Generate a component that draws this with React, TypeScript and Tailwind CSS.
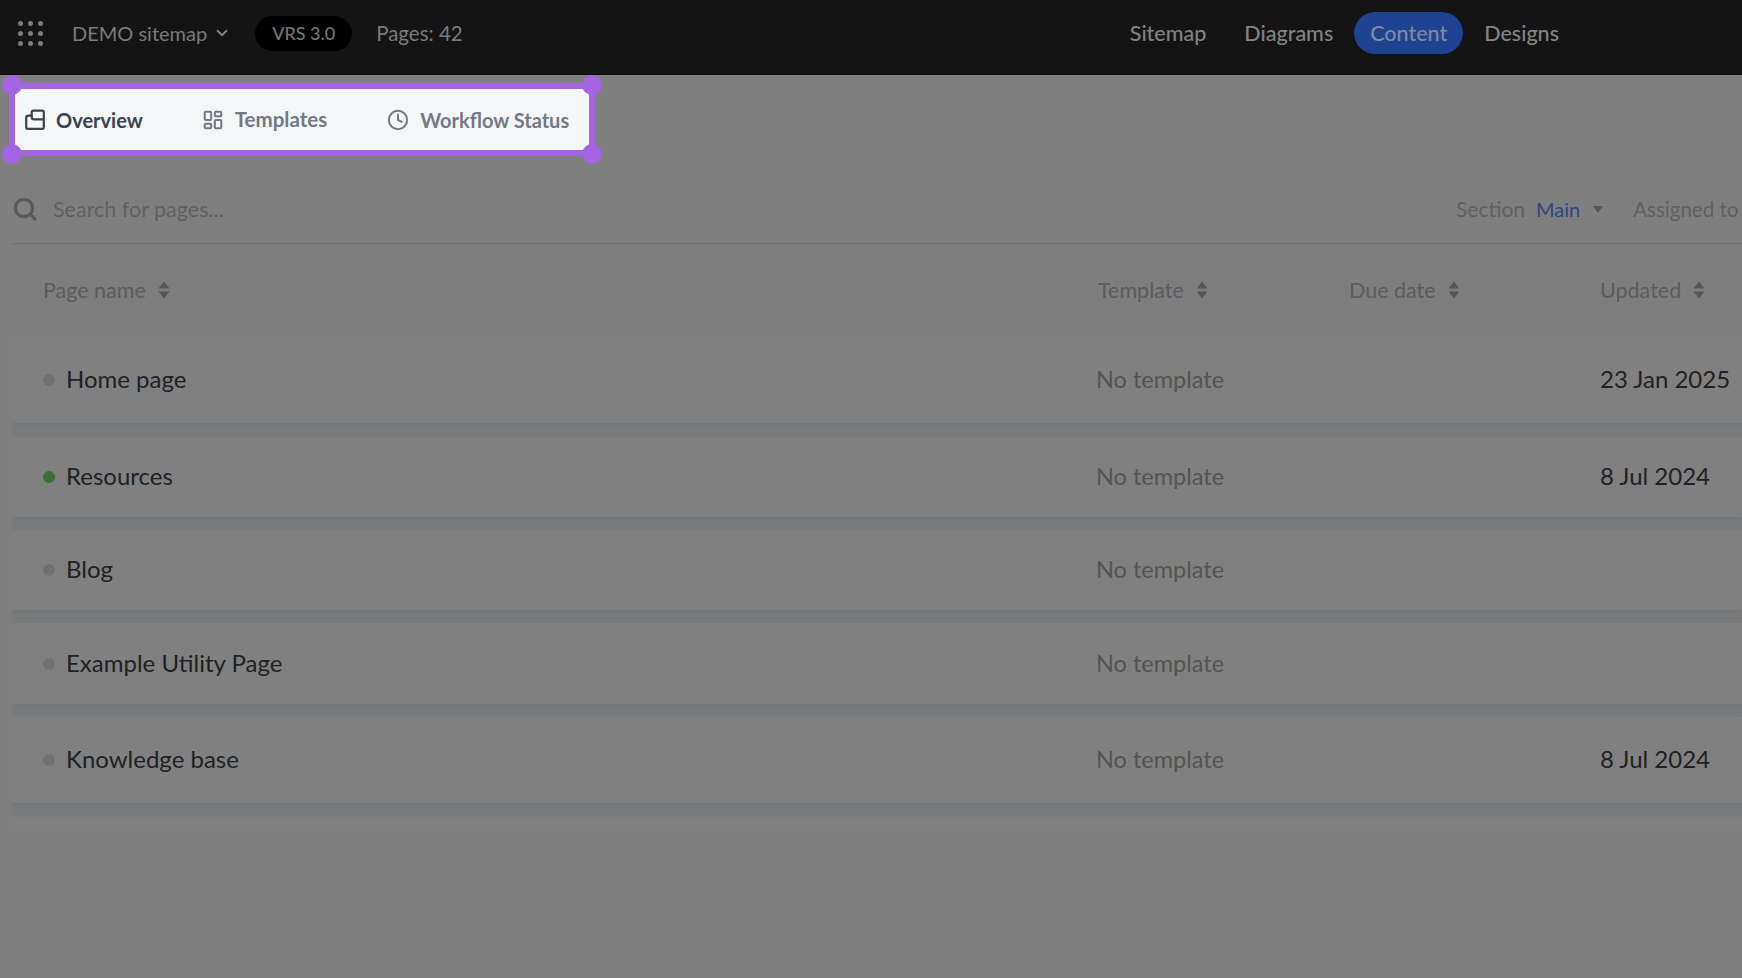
import { ChevronDown, Clock, LayoutDashboard, Search } from "lucide-react";

const rows = [
  { name: "Home page", dot: "bg-[#6f7072]", updated: "23 Jan 2025", cls: "h-[87px] mb-[14px]" },
  { name: "Resources", dot: "bg-[#3a7036]", updated: "8 Jul 2024", cls: "h-[80px] mb-[13px]" },
  { name: "Blog", dot: "bg-[#6f7072]", updated: "", cls: "h-[80px] mb-[13px]" },
  { name: "Example Utility Page", dot: "bg-[#6f7072]", updated: "", cls: "h-[81px] mb-[13px]" },
  { name: "Knowledge base", dot: "bg-[#6f7072]", updated: "8 Jul 2024", cls: "h-[86px] mb-[14px]" },
];

function SortIcon() {
  return (
    <svg width="14" height="18" viewBox="0 0 14 18" className="shrink-0 text-[#565656]" fill="currentColor">
      <path d="M7 0.5 12.5 7.5H1.5Z" />
      <path d="M7 17.5 1.5 10.5H12.5Z" />
    </svg>
  );
}

function OverviewIcon() {
  return (
    <svg width="22" height="22" viewBox="0 0 20 20" fill="none" stroke="currentColor" strokeWidth="2" strokeLinejoin="round" className="shrink-0">
      <path d="M7 6V3a1.5 1.5 0 0 1 1.5-1.5h8A1.5 1.5 0 0 1 18 3v13.5a1.5 1.5 0 0 1-1.5 1.5h-13A1.5 1.5 0 0 1 2 16.5V8a2 2 0 0 1 2-2h3v1.5a2 2 0 0 0 2 2h9" />
    </svg>
  );
}

function DotGrid() {
  return (
    <div className="grid grid-cols-3 gap-x-[5px] gap-y-[5px] w-[25px]">
      {Array.from({ length: 9 }).map((_, i) => (
        <span key={i} className="w-[5px] h-[5px] rounded-full bg-[#7d7d7d]" />
      ))}
    </div>
  );
}

function Th({ label, cls }: { label: string; cls: string }) {
  return (
    <div className={`flex items-center gap-[11px] text-[21.5px] text-[#5b5b5b] ${cls}`}>
      <span>{label}</span>
      <SortIcon />
    </div>
  );
}

export default function App() {
  return (
    <div className="w-[1742px] h-[978px] overflow-hidden bg-[#7f7f7f] font-['Lato',sans-serif]">
      <header className="h-[75px] bg-[#141414] flex items-center justify-between pl-[18px] pr-[183px] pb-[8px] border-b border-[#0c0c0c]">
        <div className="flex items-center">
          <DotGrid />
          <span className="ml-[29px] text-[20px] text-[#7a7a7a]">DEMO sitemap</span>
          <ChevronDown size={18} strokeWidth={2.5} className="ml-[6px] text-[#808080]" />
          <span className="ml-[24px] w-[97px] h-[35px] rounded-full bg-black flex items-center justify-center text-[18px] font-medium text-[#777777]">VRS 3.0</span>
          <span className="ml-[24px] text-[20.5px] text-[#7a7a7a]">Pages: 42</span>
        </div>
        <nav className="flex items-center text-[21.5px] font-medium text-[#838383]">
          <span>Sitemap</span>
          <span className="ml-[38px]">Diagrams</span>
          <span className="ml-[21px] w-[109px] h-[42px] rounded-full bg-[#1d4391] text-[#7f8a9f] flex items-center justify-center">Content</span>
          <span className="ml-[21px]">Designs</span>
        </nav>
      </header>

      <div className="pl-[12px] pt-[8px]">
        <div className="relative -ml-[3px] w-[586px] h-[73px] border-[6px] border-[#a463e0] bg-[#f5f6f8] flex items-center pl-[9px] text-[20px] font-bold">
          <span className="flex items-center text-[#3b424d]">
            <OverviewIcon />
            <span className="ml-[10px]">Overview</span>
          </span>
          <span className="flex items-center text-[#737985] ml-[59px]">
            <LayoutDashboard size={22} strokeWidth={2.2} className="shrink-0" />
            <span className="ml-[11px] text-[20.5px]">Templates</span>
          </span>
          <span className="flex items-center text-[#737985] ml-[60px]">
            <Clock size={22} strokeWidth={2.2} className="shrink-0" />
            <span className="ml-[11px]">Workflow Status</span>
          </span>
          <span className="absolute -left-[13px] -top-[14px] w-[20px] h-[20px] rounded-full bg-[#a463e0]" />
          <span className="absolute -right-[13px] -top-[14px] w-[20px] h-[20px] rounded-full bg-[#a463e0]" />
          <span className="absolute -left-[13px] -bottom-[14px] w-[20px] h-[20px] rounded-full bg-[#a463e0]" />
          <span className="absolute -right-[13px] -bottom-[14px] w-[20px] h-[20px] rounded-full bg-[#a463e0]" />
        </div>

        <div className="mt-[28px] h-[60px] pb-[9px] flex items-center border-b border-[#6e6f70] whitespace-nowrap">
          <Search size={26} strokeWidth={3} className="text-[#585a5c] shrink-0" />
          <span className="ml-[15px] text-[21.5px] text-[#5f5f5f]">Search for pages...</span>
          <div className="ml-auto w-[286px] flex items-center text-[21px] text-[#606060]">
            <span>Section</span>
            <span className="ml-[11px] text-[20px] text-[#2c4a80]">Main</span>
            <svg width="10" height="7" viewBox="0 0 10 7" className="ml-[13px] text-[#565656] shrink-0" fill="currentColor">
              <path d="M0 0H10L5 7Z" />
            </svg>
            <span className="ml-[30px] text-[20.5px]">Assigned to</span>
          </div>
        </div>

        <div className="h-[92px] flex items-center pl-[31px] whitespace-nowrap bg-[#7e7e7f]">
          <Th label="Page name" cls="w-[1055px]" />
          <Th label="Template" cls="w-[251px]" />
          <Th label="Due date" cls="w-[251px]" />
          <Th label="Updated" cls="" />
        </div>

        <div className="h-[496px] overflow-hidden bg-[#7b7c7d]">
          {rows.map((r) => (
            <div key={r.name} className={`${r.cls} flex items-center bg-[#808080] shadow-[0_2px_5px_#747678] whitespace-nowrap`}>
              <span className={`ml-[31px] w-[12px] h-[12px] rounded-full ${r.dot}`} />
              <span className="ml-[11px] w-[1030px] pb-[2px] text-[24px] text-[#202124]">{r.name}</span>
              <span className="w-[504px] text-[23.5px] text-[#535353]">No template</span>
              <span className="pb-[2px] text-[24px] text-[#202124]">{r.updated}</span>
            </div>
          ))}
          <div className="h-[20px] bg-[#808080]" />
        </div>
      </div>
    </div>
  );
}
